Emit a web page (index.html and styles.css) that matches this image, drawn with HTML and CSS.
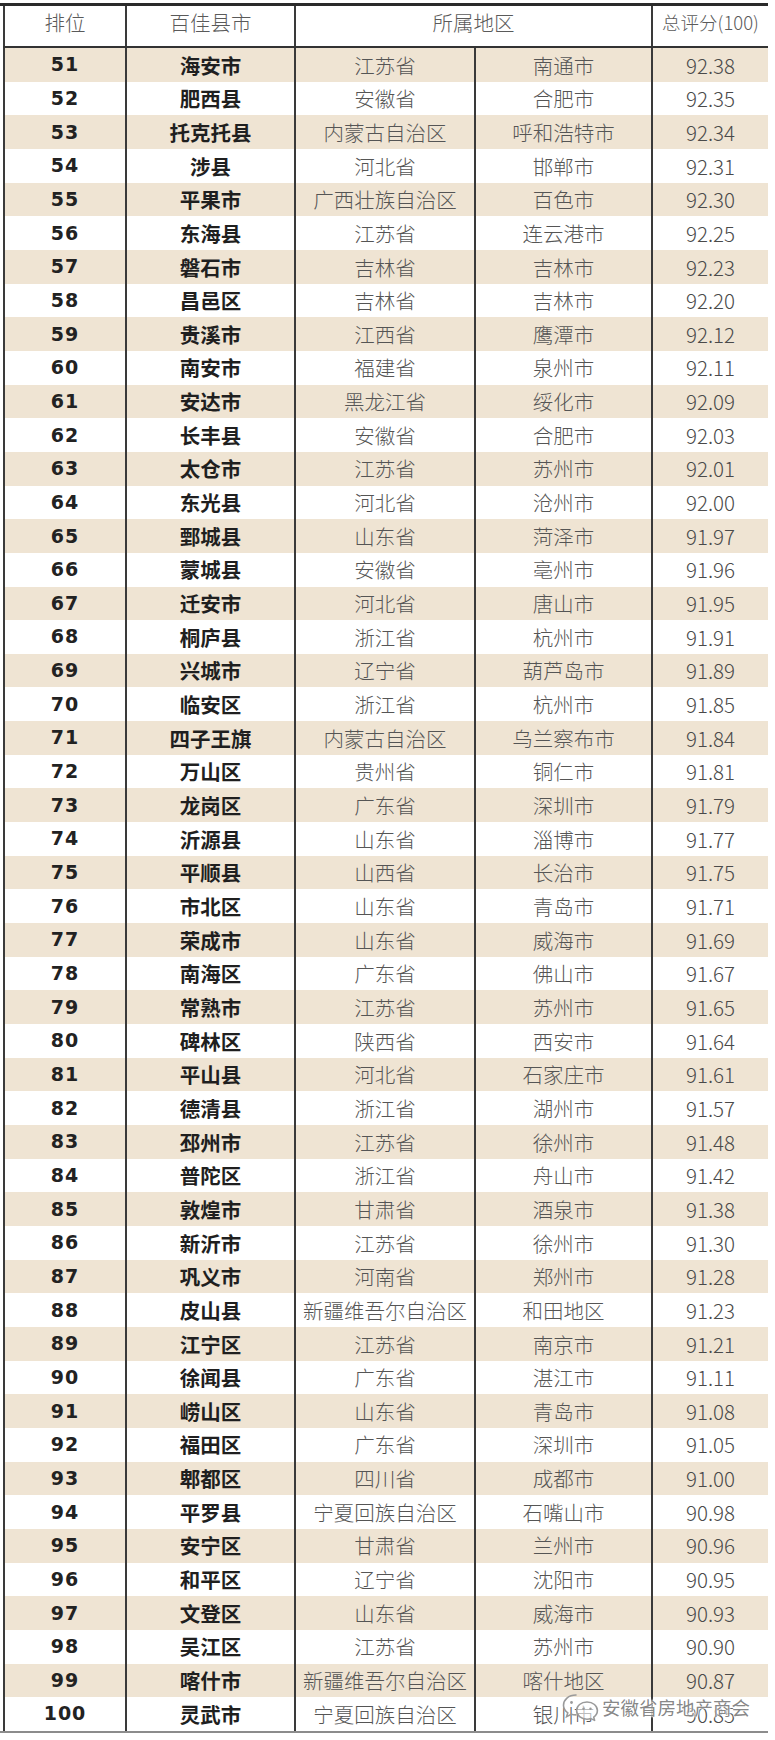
FILE: index.html
```html
<!DOCTYPE html>
<html lang="zh">
<head>
<meta charset="utf-8">
<title>百佳县市 51-100</title>
<link rel="stylesheet" href="styles.css">
</head>
<body>
<div class="page">
  <div class="table">
    <div class="row head">
      <div class="cell">排位</div>
      <div class="cell">百佳县市</div>
      <div class="cell span2">所属地区</div>
      <div class="cell">总评分(100)</div>
    </div>
    <div class="row alt"><div class="cell rank">51</div><div class="cell name">海安市</div><div class="cell reg">江苏省</div><div class="cell reg">南通市</div><div class="cell score">92.38</div></div>
    <div class="row"><div class="cell rank">52</div><div class="cell name">肥西县</div><div class="cell reg">安徽省</div><div class="cell reg">合肥市</div><div class="cell score">92.35</div></div>
    <div class="row alt"><div class="cell rank">53</div><div class="cell name">托克托县</div><div class="cell reg">内蒙古自治区</div><div class="cell reg">呼和浩特市</div><div class="cell score">92.34</div></div>
    <div class="row"><div class="cell rank">54</div><div class="cell name">涉县</div><div class="cell reg">河北省</div><div class="cell reg">邯郸市</div><div class="cell score">92.31</div></div>
    <div class="row alt"><div class="cell rank">55</div><div class="cell name">平果市</div><div class="cell reg">广西壮族自治区</div><div class="cell reg">百色市</div><div class="cell score">92.30</div></div>
    <div class="row"><div class="cell rank">56</div><div class="cell name">东海县</div><div class="cell reg">江苏省</div><div class="cell reg">连云港市</div><div class="cell score">92.25</div></div>
    <div class="row alt"><div class="cell rank">57</div><div class="cell name">磐石市</div><div class="cell reg">吉林省</div><div class="cell reg">吉林市</div><div class="cell score">92.23</div></div>
    <div class="row"><div class="cell rank">58</div><div class="cell name">昌邑区</div><div class="cell reg">吉林省</div><div class="cell reg">吉林市</div><div class="cell score">92.20</div></div>
    <div class="row alt"><div class="cell rank">59</div><div class="cell name">贵溪市</div><div class="cell reg">江西省</div><div class="cell reg">鹰潭市</div><div class="cell score">92.12</div></div>
    <div class="row"><div class="cell rank">60</div><div class="cell name">南安市</div><div class="cell reg">福建省</div><div class="cell reg">泉州市</div><div class="cell score">92.11</div></div>
    <div class="row alt"><div class="cell rank">61</div><div class="cell name">安达市</div><div class="cell reg">黑龙江省</div><div class="cell reg">绥化市</div><div class="cell score">92.09</div></div>
    <div class="row"><div class="cell rank">62</div><div class="cell name">长丰县</div><div class="cell reg">安徽省</div><div class="cell reg">合肥市</div><div class="cell score">92.03</div></div>
    <div class="row alt"><div class="cell rank">63</div><div class="cell name">太仓市</div><div class="cell reg">江苏省</div><div class="cell reg">苏州市</div><div class="cell score">92.01</div></div>
    <div class="row"><div class="cell rank">64</div><div class="cell name">东光县</div><div class="cell reg">河北省</div><div class="cell reg">沧州市</div><div class="cell score">92.00</div></div>
    <div class="row alt"><div class="cell rank">65</div><div class="cell name">鄄城县</div><div class="cell reg">山东省</div><div class="cell reg">菏泽市</div><div class="cell score">91.97</div></div>
    <div class="row"><div class="cell rank">66</div><div class="cell name">蒙城县</div><div class="cell reg">安徽省</div><div class="cell reg">亳州市</div><div class="cell score">91.96</div></div>
    <div class="row alt"><div class="cell rank">67</div><div class="cell name">迁安市</div><div class="cell reg">河北省</div><div class="cell reg">唐山市</div><div class="cell score">91.95</div></div>
    <div class="row"><div class="cell rank">68</div><div class="cell name">桐庐县</div><div class="cell reg">浙江省</div><div class="cell reg">杭州市</div><div class="cell score">91.91</div></div>
    <div class="row alt"><div class="cell rank">69</div><div class="cell name">兴城市</div><div class="cell reg">辽宁省</div><div class="cell reg">葫芦岛市</div><div class="cell score">91.89</div></div>
    <div class="row"><div class="cell rank">70</div><div class="cell name">临安区</div><div class="cell reg">浙江省</div><div class="cell reg">杭州市</div><div class="cell score">91.85</div></div>
    <div class="row alt"><div class="cell rank">71</div><div class="cell name">四子王旗</div><div class="cell reg">内蒙古自治区</div><div class="cell reg">乌兰察布市</div><div class="cell score">91.84</div></div>
    <div class="row"><div class="cell rank">72</div><div class="cell name">万山区</div><div class="cell reg">贵州省</div><div class="cell reg">铜仁市</div><div class="cell score">91.81</div></div>
    <div class="row alt"><div class="cell rank">73</div><div class="cell name">龙岗区</div><div class="cell reg">广东省</div><div class="cell reg">深圳市</div><div class="cell score">91.79</div></div>
    <div class="row"><div class="cell rank">74</div><div class="cell name">沂源县</div><div class="cell reg">山东省</div><div class="cell reg">淄博市</div><div class="cell score">91.77</div></div>
    <div class="row alt"><div class="cell rank">75</div><div class="cell name">平顺县</div><div class="cell reg">山西省</div><div class="cell reg">长治市</div><div class="cell score">91.75</div></div>
    <div class="row"><div class="cell rank">76</div><div class="cell name">市北区</div><div class="cell reg">山东省</div><div class="cell reg">青岛市</div><div class="cell score">91.71</div></div>
    <div class="row alt"><div class="cell rank">77</div><div class="cell name">荣成市</div><div class="cell reg">山东省</div><div class="cell reg">威海市</div><div class="cell score">91.69</div></div>
    <div class="row"><div class="cell rank">78</div><div class="cell name">南海区</div><div class="cell reg">广东省</div><div class="cell reg">佛山市</div><div class="cell score">91.67</div></div>
    <div class="row alt"><div class="cell rank">79</div><div class="cell name">常熟市</div><div class="cell reg">江苏省</div><div class="cell reg">苏州市</div><div class="cell score">91.65</div></div>
    <div class="row"><div class="cell rank">80</div><div class="cell name">碑林区</div><div class="cell reg">陕西省</div><div class="cell reg">西安市</div><div class="cell score">91.64</div></div>
    <div class="row alt"><div class="cell rank">81</div><div class="cell name">平山县</div><div class="cell reg">河北省</div><div class="cell reg">石家庄市</div><div class="cell score">91.61</div></div>
    <div class="row"><div class="cell rank">82</div><div class="cell name">德清县</div><div class="cell reg">浙江省</div><div class="cell reg">湖州市</div><div class="cell score">91.57</div></div>
    <div class="row alt"><div class="cell rank">83</div><div class="cell name">邳州市</div><div class="cell reg">江苏省</div><div class="cell reg">徐州市</div><div class="cell score">91.48</div></div>
    <div class="row"><div class="cell rank">84</div><div class="cell name">普陀区</div><div class="cell reg">浙江省</div><div class="cell reg">舟山市</div><div class="cell score">91.42</div></div>
    <div class="row alt"><div class="cell rank">85</div><div class="cell name">敦煌市</div><div class="cell reg">甘肃省</div><div class="cell reg">酒泉市</div><div class="cell score">91.38</div></div>
    <div class="row"><div class="cell rank">86</div><div class="cell name">新沂市</div><div class="cell reg">江苏省</div><div class="cell reg">徐州市</div><div class="cell score">91.30</div></div>
    <div class="row alt"><div class="cell rank">87</div><div class="cell name">巩义市</div><div class="cell reg">河南省</div><div class="cell reg">郑州市</div><div class="cell score">91.28</div></div>
    <div class="row"><div class="cell rank">88</div><div class="cell name">皮山县</div><div class="cell reg">新疆维吾尔自治区</div><div class="cell reg">和田地区</div><div class="cell score">91.23</div></div>
    <div class="row alt"><div class="cell rank">89</div><div class="cell name">江宁区</div><div class="cell reg">江苏省</div><div class="cell reg">南京市</div><div class="cell score">91.21</div></div>
    <div class="row"><div class="cell rank">90</div><div class="cell name">徐闻县</div><div class="cell reg">广东省</div><div class="cell reg">湛江市</div><div class="cell score">91.11</div></div>
    <div class="row alt"><div class="cell rank">91</div><div class="cell name">崂山区</div><div class="cell reg">山东省</div><div class="cell reg">青岛市</div><div class="cell score">91.08</div></div>
    <div class="row"><div class="cell rank">92</div><div class="cell name">福田区</div><div class="cell reg">广东省</div><div class="cell reg">深圳市</div><div class="cell score">91.05</div></div>
    <div class="row alt"><div class="cell rank">93</div><div class="cell name">郫都区</div><div class="cell reg">四川省</div><div class="cell reg">成都市</div><div class="cell score">91.00</div></div>
    <div class="row"><div class="cell rank">94</div><div class="cell name">平罗县</div><div class="cell reg">宁夏回族自治区</div><div class="cell reg">石嘴山市</div><div class="cell score">90.98</div></div>
    <div class="row alt"><div class="cell rank">95</div><div class="cell name">安宁区</div><div class="cell reg">甘肃省</div><div class="cell reg">兰州市</div><div class="cell score">90.96</div></div>
    <div class="row"><div class="cell rank">96</div><div class="cell name">和平区</div><div class="cell reg">辽宁省</div><div class="cell reg">沈阳市</div><div class="cell score">90.95</div></div>
    <div class="row alt"><div class="cell rank">97</div><div class="cell name">文登区</div><div class="cell reg">山东省</div><div class="cell reg">威海市</div><div class="cell score">90.93</div></div>
    <div class="row"><div class="cell rank">98</div><div class="cell name">吴江区</div><div class="cell reg">江苏省</div><div class="cell reg">苏州市</div><div class="cell score">90.90</div></div>
    <div class="row alt"><div class="cell rank">99</div><div class="cell name">喀什市</div><div class="cell reg">新疆维吾尔自治区</div><div class="cell reg">喀什地区</div><div class="cell score">90.87</div></div>
    <div class="row"><div class="cell rank">100</div><div class="cell name">灵武市</div><div class="cell reg">宁夏回族自治区</div><div class="cell reg">银川市</div><div class="cell score">90.85</div></div>
  </div>
  <div class="watermark">
    <svg class="wm-icon" width="38" height="30" viewBox="0 0 38 30">
      <path d="M14 3 C6.5 3 1.5 7.8 1.5 13.2 C1.5 16.4 3.2 19 5.8 20.8 L4.6 24.6 L9.2 22.3 C10.6 22.7 12.2 22.9 14 22.9" fill="none" stroke="#9a9a9a" stroke-width="1.6" stroke-linecap="round"/>
      <path d="M25 10 C19 10 14.6 13.8 14.6 18.6 C14.6 23.4 19 27.2 25 27.2 C26.4 27.2 27.7 27 28.9 26.6 L32.6 28.4 L31.7 25.2 C34 23.6 35.4 21.3 35.4 18.6 C35.4 13.8 31 10 25 10 Z" fill="rgba(255,255,255,0.6)" stroke="#9a9a9a" stroke-width="1.6" stroke-linejoin="round"/>
      <circle cx="9.5" cy="10.5" r="1.4" fill="#9a9a9a"/>
      <circle cx="21.5" cy="16.8" r="1.2" fill="#9a9a9a"/>
      <circle cx="28.5" cy="16.8" r="1.2" fill="#9a9a9a"/>
    </svg>
    <span class="wm-text">安徽省房地产商会</span>
  </div>
</div>
</body>
</html>
```

FILE: styles.css
```css
* {
  box-sizing: border-box;
}

html, body {
  margin: 0;
  padding: 0;
  background: #ffffff;
}

body {
  font-family: "Noto Sans CJK SC", "Noto Sans", sans-serif;
}

.page {
  position: relative;
  width: 775px;
  height: 1740px;
  padding-top: 3px;
}

.table {
  width: 768px;
  border-top: 3px solid #2a2a2a;
  border-bottom: 2px solid #8c8c8c;
  padding-left: 3px;
}

.row {
  display: grid;
  grid-template-columns: 122px 169px 180px 177px 117px;
  height: 33.66px;
}

.row.alt {
  background: #efe4d3;
}

.cell {
  border-left: 2px solid #3a3a3a;
  display: flex;
  align-items: center;
  justify-content: center;
  white-space: nowrap;
  line-height: 1;
}

.head {
  height: 42px;
  border-bottom: 2px solid #333333;
}

.head .cell {
  align-items: flex-start;
  padding-top: 6px;
  font-size: 20.5px;
  font-weight: 300;
  color: #5a5a5a;
}

.head .cell:last-child {
  font-size: 18.5px;
  padding-top: 7px;
}

.span2 {
  grid-column: span 2;
}

.rank {
  font-family: "DejaVu Sans", sans-serif;
  font-weight: bold;
  font-size: 19px;
  letter-spacing: 1px;
  color: #222222;
}

.name {
  font-weight: bold;
  font-size: 20.5px;
  color: #1f1f1f;
}

.reg {
  font-size: 20.5px;
  font-weight: 300;
  color: #555555;
}

.score {
  font-size: 20.5px;
  font-weight: 300;
  color: #4a4a4a;
}

.watermark {
  position: absolute;
  left: 562px;
  top: 1692px;
  display: flex;
  align-items: center;
  gap: 2px;
}

.wm-text {
  font-size: 18.5px;
  color: rgba(120, 120, 120, 0.9);
  text-shadow: 0 0 2px #ffffff, 0 0 2px #ffffff, 0 0 3px #ffffff;
  line-height: 1;
}
```
